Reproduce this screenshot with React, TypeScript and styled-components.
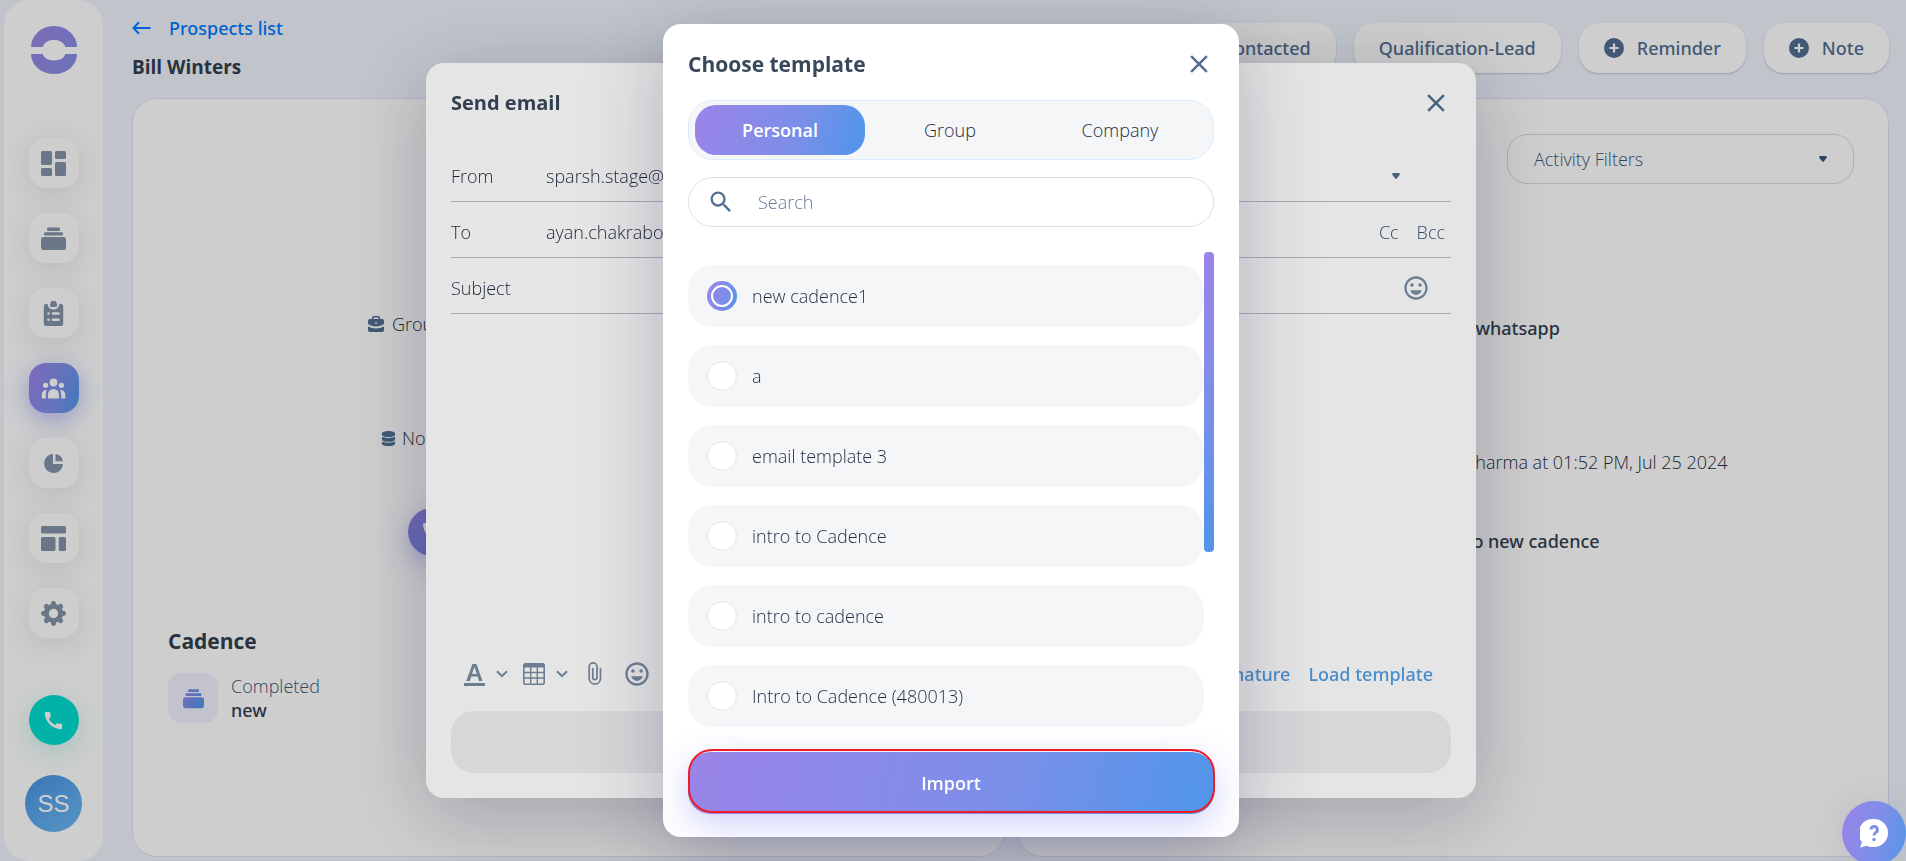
import React, { useState } from "react";
import styled, { createGlobalStyle, css } from "styled-components";
import { MdClose, MdSearch, MdOutlineEmojiEmotions, MdCall } from "react-icons/md";
import { FaDatabase } from "react-icons/fa6";

const color = {
  page: "#eff4fc",
  ink: "#1f2c40",
  title: "#3a485b",
  heading: "#333f4f",
  slate: "#516f90",
  slateText: "#3b5778",
  icon: "#8294a9",
  muted: "#667c96",
  field: "#f4f6f8",
};
const brand = "linear-gradient(105deg, #9b84e8 0%, #7b8fe8 60%, #5495ea 95%)";

const GlobalStyle = createGlobalStyle`
  *, *::before, *::after { box-sizing: border-box; }
  body {
    margin: 0;
    background: ${color.page};
    color: ${color.ink};
    font: 300 18px/26px "Open Sans", "Noto Sans", sans-serif;
    overflow: hidden;
  }
  button, input, select, textarea { font: inherit; color: inherit; margin: 0; }
  button { border: 0; padding: 0; background: none; cursor: pointer; }
  h1, h2, p { margin: 0; }
  svg { display: block; }
`;

/* ---------- icons ---------- */

type IconProps = { size: number };

const DashboardIcon = ({ size }: IconProps) => (
  <svg width={size} height={size} viewBox="0 0 25 25" fill="currentColor">
    <rect width="11" height="14" rx="1.5" />
    <rect y="17" width="11" height="8" rx="1.5" />
    <rect x="14" width="11" height="8" rx="1.5" />
    <rect x="14" y="11" width="11" height="14" rx="1.5" />
  </svg>
);

const StackIcon = ({ size, gradient }: IconProps & { gradient?: boolean }) => (
  <svg width={size} height={size} viewBox="0 0 25 25" fill={gradient ? "url(#stackFill)" : "currentColor"}>
    {gradient && (
      <defs>
        <linearGradient id="stackFill" gradientUnits="userSpaceOnUse" x1="0" y1="0" x2="25" y2="10">
          <stop offset="0" stopColor="#9b84e8" />
          <stop offset="1" stopColor="#5495ea" />
        </linearGradient>
      </defs>
    )}
    <rect x="6" y="1.5" width="13" height="3.4" rx="1.2" />
    <rect x="3" y="6.2" width="19" height="3.4" rx="1.2" />
    <rect y="11" width="25" height="13" rx="2.8" />
  </svg>
);

const ClipboardIcon = ({ size }: IconProps) => (
  <svg width={size} height={size} viewBox="0 0 25 25" fill="currentColor">
    <path
      fillRule="evenodd"
      d="M5 3H6.500A6 5.500 0 0 0 18.500 3H20A2.200 2.200 0 0 1 22.200 5.200V22.800A2.200 2.200 0 0 1 20 25H5A2.200 2.200 0 0 1 2.800 22.800V5.200A2.200 2.200 0 0 1 5 3ZM7.500 11.200A1.300 1.300 0 1 0 7.500 13.800A1.300 1.300 0 1 0 7.500 11.200ZM12 11.200A1.300 1.300 0 0 0 12 13.800H17.500A1.300 1.300 0 0 0 17.500 11.200ZM7.500 17.400A1.300 1.300 0 1 0 7.500 20A1.300 1.300 0 1 0 7.500 17.400ZM12 17.400A1.300 1.300 0 0 0 12 20H17.500A1.300 1.300 0 0 0 17.500 17.400Z"
    />
    <path d="M9.500 2.500A3 3 0 0 1 15.500 2.500H16V4.500A1.400 1.400 0 0 1 14.600 6H10.400A1.400 1.400 0 0 1 9 4.500V2.500Z" />
  </svg>
);

const PeopleIcon = ({ size }: IconProps) => (
  <svg width={size} height={size} viewBox="0 0 25 25" fill="currentColor">
    <circle cx="12.500" cy="6.500" r="3.900" />
    <circle cx="4.600" cy="9.300" r="2.600" />
    <circle cx="20.400" cy="9.300" r="2.600" />
    <path d="M7 22.500V18.500A5.500 5.500 0 0 1 18 18.500V22.500Z" />
    <path d="M.8 22.500V18A4.300 4.300 0 0 1 5.800 14Q4.800 16 4.800 18.500V22.500Z" />
    <path d="M24.200 22.500V18A4.300 4.300 0 0 0 19.200 14Q20.200 16 20.200 18.500V22.500Z" />
  </svg>
);

const PieIcon = ({ size }: IconProps) => (
  <svg width={size} height={size} viewBox="0 0 25 25" fill="currentColor">
    <path d="M12 3V13H22A9.500 9.500 0 1 1 12 3Z" />
    <path d="M14.500 3A8.500 8.500 0 0 1 22 10.200H14.500Z" />
  </svg>
);

const LayoutIcon = ({ size }: IconProps) => (
  <svg width={size} height={size} viewBox="0 0 25 25" fill="currentColor">
    <rect width="25" height="7.500" rx="1.500" />
    <rect y="11" width="14.500" height="14" rx="1.500" />
    <rect x="17.700" y="11" width="7.300" height="14" rx="1.500" />
  </svg>
);

const GearIcon = ({ size }: IconProps) => (
  <svg width={size} height={size} viewBox="0 0 25 25" fill="none" stroke="currentColor">
    <circle cx="12.500" cy="12.500" r="7.200" strokeWidth="5" />
    {[0, 45, 90, 135].map((angle) => (
      <g key={angle} transform={`rotate(${angle} 12.500 12.500)`} fill="currentColor" stroke="none">
        <rect x="10" y="0" width="5" height="6" rx="2.400" />
        <rect x="10" y="19" width="5" height="6" rx="2.400" />
      </g>
    ))}
  </svg>
);

const LogoIcon = () => (
  <svg width="46" height="48" viewBox="0 0 46 48" fill="url(#logoFill)">
    <defs>
      <linearGradient id="logoFill" gradientUnits="userSpaceOnUse" x1="0" y1="0" x2="46" y2="20">
        <stop offset="0" stopColor="#9b84e0" />
        <stop offset="1" stopColor="#888ee6" />
      </linearGradient>
    </defs>
    <path d="M0 21A23 21 0 0 1 46 21H34.500A12 10 0 0 0 11.500 21Z" />
    <path d="M0 28H11.500A12 9 0 0 0 34.500 28H46A23 20 0 0 1 0 28Z" />
  </svg>
);

const BriefcaseIcon = () => (
  <svg width="16" height="16" viewBox="0 0 16 16" fill="currentColor">
    <path fillRule="evenodd" d="M4 3V2A2 2 0 0 1 6 0H10A2 2 0 0 1 12 2V3H14A2 2 0 0 1 16 5V8Q12 10.500 8 10.500T0 8V5A2 2 0 0 1 2 3ZM5.600 3H10.400V1.600H5.600ZM8 6.300A.9.9 0 1 0 8 8.100A.9.9 0 1 0 8 6.300Z" />
    <path d="M0 10.500Q4 12.500 8 12.500T16 10.500V14A2 2 0 0 1 14 16H2A2 2 0 0 1 0 14Z" />
  </svg>
);

const ArrowLeftIcon = () => (
  <svg width="19" height="14" viewBox="0 0 19 14" fill="none" stroke="currentColor" strokeWidth="2">
    <path d="M18.500 7H1.500M7 1.200L1.500 7L7 12.800" />
  </svg>
);

const PlusCircleIcon = () => (
  <svg width="20" height="20" viewBox="0 0 20 20">
    <circle cx="10" cy="10" r="10" fill="currentColor" />
    <path d="M10 5.500V14.500M5.500 10H14.500" stroke="#fff" strokeWidth="2.200" />
  </svg>
);

const CaretIcon = () => (
  <svg width="8" height="6" viewBox="0 0 8 6" fill="currentColor">
    <path d="M1 0H7Q8.500 .5 7.500 2L5 5.200Q4 6.200 3 5.200L.5 2Q-.5 .5 1 0Z" />
  </svg>
);

const ChevronIcon = () => (
  <svg width="12" height="8" viewBox="0 0 12 8" fill="none" stroke="currentColor" strokeWidth="2">
    <path d="M1 1.200L6 6.200L11 1.200" />
  </svg>
);

const TableIcon = () => (
  <svg width="22" height="22" viewBox="0 0 22 22" fill="none" stroke="currentColor">
    <rect x=".8" y=".8" width="20.400" height="20.400" rx="2" strokeWidth="1.600" />
    <path d="M1 2.500H21" strokeWidth="4" />
    <path d="M1 9.500H21M1 15H21M7.700 4V21M14.300 4V21" strokeWidth="1.400" />
  </svg>
);

const ClipIcon = () => (
  <svg width="14" height="24" viewBox="0 0 14 24" fill="none" stroke="currentColor" strokeWidth="1.700" strokeLinecap="round">
    <path d="M12.500 6.500V17A5.700 5.700 0 0 1 1.200 17V4.800A3.900 3.900 0 0 1 9 4.800V15.500A2.100 2.100 0 0 1 4.800 15.500V6.500" />
  </svg>
);

const HelpIcon = () => (
  <svg width="28" height="33" viewBox="0 0 28 33">
    <path fill="#fff" d="M14 2A14 14 0 0 1 14 30Q9.500 30.500 7 28.800L0 30.500L2 25A14 14 0 0 1 14 2Z" />
    <path d="M11 12.500A3.200 3.200 0 1 1 15.500 15.600Q14 16.500 14 18.500" fill="none" stroke="#7b8ee8" strokeWidth="2.800" />
    <circle cx="14" cy="22.500" r="1.700" fill="#7b8ee8" />
  </svg>
);

/* ---------- page behind the dialogs ---------- */

const Shell = styled.div`
  display: flex;
  gap: 29px;
  min-height: 100vh;
  padding: 0 17px 0 4px;
`;

const Sidebar = styled.nav`
  display: flex;
  flex-direction: column;
  align-items: center;
  flex: 0 0 99px;
  padding: 26px 0 0;
  border-radius: 25px;
  background: #fff;
`;

const NavList = styled.div`
  display: flex;
  flex-direction: column;
  gap: 25px;
  margin: 64px 0 57px;
`;

const NavButton = styled.button<{ $active?: boolean }>`
  display: grid;
  place-items: center;
  width: 50px;
  height: 50px;
  border-radius: 17px;
  color: ${color.icon};
  background: #fff;
  box-shadow: 0 6px 30px rgba(30, 30, 40, 0.12);
  ${(p) =>
    p.$active &&
    css`
      color: #fff;
      background: ${brand};
      box-shadow: 0 6px 24px rgba(80, 100, 230, 0.45);
    `}
`;

const CallButton = styled.button`
  display: grid;
  place-items: center;
  width: 50px;
  height: 50px;
  border-radius: 50%;
  color: #fff;
  background: #00dccf;
  box-shadow: 0 8px 28px rgba(0, 190, 170, 0.22);
`;

const Avatar = styled.button`
  width: 57px;
  height: 57px;
  margin-top: 30px;
  border-radius: 50%;
  color: #fff;
  background: linear-gradient(145deg, #4a92e2, #6cbaf4);
  font: 400 24px/57px "Liberation Sans", Arial, sans-serif;
`;

const Main = styled.main`
  display: flex;
  flex-direction: column;
  flex: 1;
  min-width: 0;
  padding: 15px 0 4px;
`;

const Header = styled.header`
  display: flex;
  justify-content: space-between;
  height: 83px;
`;

const BackLink = styled.a`
  display: flex;
  align-items: center;
  gap: 18px;
  color: #007aff;
  font-family: "Noto Sans", sans-serif;
  font-weight: 500;
  text-decoration: none;
`;

const PersonName = styled.h1`
  margin-top: 13px;
  color: ${color.heading};
  font-size: 19px;
  font-weight: 700;
  line-height: 26px;
`;

const HeaderActions = styled.div`
  display: flex;
  gap: 18px;
  padding-top: 8px;
`;

const PillButton = styled.button`
  display: flex;
  align-items: center;
  gap: 13px;
  height: 50px;
  padding: 0 25px;
  border-radius: 20px;
  color: ${color.slate};
  background: #fff;
  box-shadow: 0 1px 2px rgba(40, 50, 80, 0.25);
  font-family: "Noto Sans", sans-serif;
  font-weight: 500;
`;

const Cards = styled.div`
  display: grid;
  grid-template-columns: 1fr 1fr;
  gap: 12px;
  flex: 1;
`;

const Card = styled.section`
  padding: 35px 34px 35px 35px;
  border: 1px solid #dde1f8;
  border-radius: 25px;
  background: #fff;
`;

const InfoLine = styled.p<{ $indent: number; $top: number }>`
  display: flex;
  align-items: center;
  gap: ${(p) => (p.$indent > 210 ? 6 : 8)}px;
  margin: ${(p) => p.$top}px 0 0 ${(p) => p.$indent}px;
  svg {
    color: ${color.slate};
  }
`;

const RoundCall = styled.button`
  display: grid;
  place-items: center;
  width: 48px;
  height: 48px;
  margin: 57px 0 0 240px;
  border-radius: 50%;
  color: #fff;
  background: linear-gradient(135deg, #8f80e0, #6f86e0);
  box-shadow: 0 8px 28px rgba(80, 80, 220, 0.35);
`;

const CardTitle = styled.h2`
  margin-top: 70px;
  color: ${color.heading};
  font-size: 21px;
  font-weight: 700;
  line-height: 30px;
`;

const CadenceRow = styled.div`
  display: flex;
  align-items: center;
  gap: 13px;
  margin-top: 17px;
  line-height: 24px;
`;

const CadenceTile = styled.div`
  display: grid;
  place-items: center;
  width: 50px;
  height: 50px;
  border-radius: 14px;
  background: #f0f2fe;
`;

const Status = styled.div`
  color: ${color.slateText};
`;

const Strong = styled.div`
  color: ${color.heading};
  font-family: "Noto Sans", sans-serif;
  font-weight: 500;
`;

const FilterBox = styled.label`
  display: flex;
  align-items: center;
  width: 347px;
  height: 50px;
  margin-left: auto;
  padding: 0 26px;
  border: 1px solid #d8dadc;
  border-radius: 20px;
  color: ${color.slateText};
`;

const PlainSelect = styled.select`
  flex: 1;
  min-width: 0;
  padding: 0;
  border: 0;
  outline: 0;
  appearance: none;
  background: none;
`;

const Feed = styled.div`
  display: flex;
  flex-direction: column;
  padding: 131px 0 0 413px;
  white-space: nowrap;
`;

const FeedEvent = styled(Strong)<{ $indent?: number }>`
  margin-left: ${(p) => p.$indent ?? 0}px;
`;

const FeedMeta = styled.p`
  margin: 108px 0 53px;
`;

/* ---------- dialogs ---------- */

const Backdrop = styled.div`
  position: fixed;
  inset: 0;
  display: grid;
  place-items: center;
  padding-right: 4px;
  background: rgba(0, 0, 0, 0.1);
`;

const Dialog = styled.div<{ $width: number; $bottom: number }>`
  display: flex;
  flex-direction: column;
  width: ${(p) => p.$width}px;
  max-width: 100%;
  padding: 25px 25px ${(p) => p.$bottom}px;
  border-radius: 18px;
  background: #fff;
  box-shadow: 0 16px 80px rgba(30, 30, 70, 0.26);
`;

const DialogHead = styled.div`
  display: flex;
  align-items: center;
  justify-content: space-between;
  height: 30px;
`;

const DialogTitle = styled.h2<{ $size: number }>`
  color: ${color.title};
  font-size: ${(p) => p.$size}px;
  font-weight: 700;
  line-height: 28px;
`;

const CloseButton = styled.button`
  color: ${color.slate};
`;

const FieldRow = styled.div<{ $first?: boolean }>`
  display: flex;
  align-items: center;
  height: 56px;
  margin-top: ${(p) => (p.$first ? 28 : 0)}px;
  padding-top: 4px;
  border-bottom: 1px solid #b5c1ce;
`;

const FieldLabel = styled.label`
  flex: 0 0 95px;
`;

const PlainInput = styled.input`
  flex: 1;
  min-width: 0;
  padding: 0;
  border: 0;
  outline: 0;
  background: none;
  &::placeholder {
    color: ${color.muted};
    opacity: 1;
  }
`;

const FieldEnd = styled.div<{ $pad: number }>`
  display: flex;
  gap: 18px;
  padding-right: ${(p) => p.$pad}px;
  color: ${color.slate};
`;

const LinkButton = styled.button`
  color: ${color.slateText};
`;

const IconButton = styled.button`
  color: #7a8da3;
`;

const Editor = styled.textarea`
  height: 348px;
  border: 0;
  outline: 0;
  resize: none;
  background: none;
`;

const Toolbar = styled.div`
  display: flex;
  align-items: center;
  height: 24px;
  padding: 0 18px 0 13px;
  color: #7a8da3;
`;

const ToolGroup = styled.div`
  display: flex;
  align-items: center;
  gap: 11px;
  margin-right: 15px;
`;

const LetterButton = styled.button`
  width: 21px;
  height: 24px;
  border-bottom: 3px solid currentColor;
  color: #7a8da3;
  font-family: "Liberation Sans", Arial, sans-serif;
  font-size: 24px;
  font-weight: 700;
  line-height: 20px;
`;

const ToolIcons = styled.div`
  display: flex;
  align-items: center;
  gap: 21px;
  margin: 0 auto 0 5px;
`;

const TextAction = styled.button`
  margin-left: 18px;
  color: #539de2;
  font-family: "Noto Sans", sans-serif;
  font-weight: 500;
`;

const SendButton = styled.button`
  height: 62px;
  margin-top: 25px;
  border-radius: 23px;
  background: #eff0f1;
`;

const Tabs = styled.div`
  display: grid;
  grid-template-columns: repeat(3, 1fr);
  height: 60px;
  margin-top: 21px;
  padding: 4px 8px 4px 6px;
  border: 1px solid #d9ecfd;
  border-radius: 25px;
  background: ${color.field};
`;

const Tab = styled.button<{ $active: boolean }>`
  border-radius: 21px;
  ${(p) =>
    p.$active &&
    css`
      color: #fff;
      background: ${brand};
      font-weight: 600;
    `}
`;

const SearchBox = styled.label`
  display: flex;
  align-items: center;
  gap: 23px;
  height: 50px;
  margin-top: 17px;
  padding: 0 18px;
  border: 1px solid #dcdee0;
  border-radius: 25px;
  color: ${color.slate};
`;

const ListArea = styled.div`
  display: flex;
  margin-top: 25px;
`;

const TemplateList = styled.div`
  display: flex;
  flex: 1;
  flex-direction: column;
  gap: 18px;
  padding-top: 13px;
`;

const ScrollThumb = styled.div`
  width: 10px;
  height: 300px;
  border-radius: 4px;
  background: linear-gradient(180deg, #9b84e8, #7b8fe8 50%, #5495ea 95%);
`;

const TemplateRow = styled.label`
  display: flex;
  align-items: center;
  gap: 15px;
  height: 62px;
  padding: 0 19px;
  border-radius: 25px;
  background: ${color.field};
  cursor: pointer;
`;

const Radio = styled.input`
  position: relative;
  width: 30px;
  height: 30px;
  border: 1px solid #e4e7ea;
  border-radius: 50%;
  appearance: none;
  background: #fff;
  &:checked {
    border: 0;
    background: ${brand};
  }
  &:checked::after {
    content: "";
    position: absolute;
    inset: 4px;
    border: 2px solid #fff;
    border-radius: 50%;
  }
`;

const ImportButton = styled.button`
  position: relative;
  height: 62px;
  margin-top: 25px;
  border-radius: 22px;
  color: #fff;
  background: ${brand};
  box-shadow: 0 10px 36px rgba(100, 110, 235, 0.32);
  font-weight: 600;
  line-height: 54px;
  &::after {
    content: "";
    position: absolute;
    inset: -3px -1px 1px 0;
    border: 2px solid #ee1c24;
    border-radius: 24px;
  }
`;

const HelpButton = styled.button`
  position: fixed;
  right: 0;
  bottom: -4px;
  display: grid;
  place-items: center;
  width: 64px;
  height: 64px;
  border-radius: 50%;
  background: ${brand};
  box-shadow: 0 0 32px rgba(80, 80, 160, 0.12);
`;

const navItems = [
  { name: "Dashboard", Icon: DashboardIcon },
  { name: "Cadences", Icon: StackIcon },
  { name: "Tasks", Icon: ClipboardIcon },
  { name: "Prospects", Icon: PeopleIcon },
  { name: "Reports", Icon: PieIcon },
  { name: "Templates", Icon: LayoutIcon },
  { name: "Settings", Icon: GearIcon },
];

const scopes = ["Personal", "Group", "Company"];

const templates = [
  "new cadence1",
  "a",
  "email template 3",
  "intro to Cadence",
  "intro to cadence",
  "Intro to Cadence (480013)",
];

function ProspectPage() {
  return (
    <Shell>
      <Sidebar>
        <LogoIcon />
        <NavList>
          {navItems.map(({ name, Icon }) => (
            <NavButton key={name} aria-label={name} $active={name === "Prospects"}>
              <Icon size={25} />
            </NavButton>
          ))}
        </NavList>
        <CallButton aria-label="Call">
          <MdCall size={23} />
        </CallButton>
        <Avatar>SS</Avatar>
      </Sidebar>
      <Main>
        <Header>
          <div>
            <BackLink href="#prospects">
              <ArrowLeftIcon />
              Prospects list
            </BackLink>
            <PersonName>Bill Winters</PersonName>
          </div>
          <HeaderActions>
            <PillButton>Contacted</PillButton>
            <PillButton>Qualification-Lead</PillButton>
            <PillButton>
              <PlusCircleIcon />
              Reminder
            </PillButton>
            <PillButton>
              <PlusCircleIcon />
              Note
            </PillButton>
          </HeaderActions>
        </Header>
        <Cards>
          <Card>
            <InfoLine $indent={200} $top={177}>
              <BriefcaseIcon />
              Group
            </InfoLine>
            <InfoLine $indent={213} $top={88}>
              <FaDatabase size={15} />
              Not available
            </InfoLine>
            <RoundCall aria-label="Call prospect">
              <MdCall size={24} />
            </RoundCall>
            <CardTitle>Cadence</CardTitle>
            <CadenceRow>
              <CadenceTile>
                <StackIcon size={21} gradient />
              </CadenceTile>
              <div>
                <Status>Completed</Status>
                <Strong>new</Strong>
              </div>
            </CadenceRow>
          </Card>
          <Card>
            <FilterBox>
              <PlainSelect aria-label="Activity filters">
                <option>Activity Filters</option>
              </PlainSelect>
              <CaretIcon />
            </FilterBox>
            <Feed>
              <FeedEvent $indent={10}>whatsapp</FeedEvent>
              <FeedMeta>Sharma at 01:52 PM, Jul 25 2024</FeedMeta>
              <FeedEvent>to new cadence</FeedEvent>
            </Feed>
          </Card>
        </Cards>
      </Main>
    </Shell>
  );
}

function SendEmailDialog() {
  return (
    <Backdrop>
      <Dialog role="dialog" aria-label="Send email" $width={1050} $bottom={25}>
        <DialogHead>
          <DialogTitle $size={20}>Send email</DialogTitle>
          <CloseButton aria-label="Close email">
            <MdClose size={30} />
          </CloseButton>
        </DialogHead>
        <FieldRow $first>
          <FieldLabel htmlFor="from">From</FieldLabel>
          <PlainSelect id="from">
            <option>sparsh.stage@gmail.com</option>
          </PlainSelect>
          <FieldEnd $pad={51}>
            <CaretIcon />
          </FieldEnd>
        </FieldRow>
        <FieldRow>
          <FieldLabel htmlFor="to">To</FieldLabel>
          <PlainInput id="to" defaultValue="ayan.chakraborty@gmail.com" />
          <FieldEnd $pad={6}>
            <LinkButton>Cc</LinkButton>
            <LinkButton>Bcc</LinkButton>
          </FieldEnd>
        </FieldRow>
        <FieldRow>
          <FieldLabel htmlFor="subject">Subject</FieldLabel>
          <PlainInput id="subject" />
          <FieldEnd $pad={21}>
            <IconButton aria-label="Subject emoji">
              <MdOutlineEmojiEmotions size={28} />
            </IconButton>
          </FieldEnd>
        </FieldRow>
        <Editor aria-label="Message" />
        <Toolbar>
          <ToolGroup>
            <LetterButton>A</LetterButton>
            <ChevronIcon />
          </ToolGroup>
          <ToolGroup>
            <TableIcon />
            <ChevronIcon />
          </ToolGroup>
          <ToolIcons>
            <ClipIcon />
            <MdOutlineEmojiEmotions size={28} />
          </ToolIcons>
          <TextAction>Signature</TextAction>
          <TextAction>Load template</TextAction>
        </Toolbar>
        <SendButton aria-label="Send" />
      </Dialog>
    </Backdrop>
  );
}

function ChooseTemplateDialog() {
  const [scope, setScope] = useState("Personal");
  const [selected, setSelected] = useState(0);
  return (
    <Backdrop>
      <Dialog role="dialog" aria-label="Choose template" $width={576} $bottom={23}>
        <DialogHead>
          <DialogTitle $size={21}>Choose template</DialogTitle>
          <CloseButton aria-label="Close templates">
            <MdClose size={30} />
          </CloseButton>
        </DialogHead>
        <Tabs role="tablist">
          {scopes.map((name) => (
            <Tab key={name} role="tab" $active={name === scope} onClick={() => setScope(name)}>
              {name}
            </Tab>
          ))}
        </Tabs>
        <SearchBox>
          <MdSearch size={28} />
          <PlainInput type="text" placeholder="Search" aria-label="Search" />
        </SearchBox>
        <ListArea>
          <TemplateList>
            {templates.map((name, index) => (
              <TemplateRow key={name}>
                <Radio type="radio" name="template" checked={selected === index} onChange={() => setSelected(index)} />
                {name}
              </TemplateRow>
            ))}
          </TemplateList>
          <ScrollThumb />
        </ListArea>
        <ImportButton>Import</ImportButton>
      </Dialog>
    </Backdrop>
  );
}

export default function App() {
  return (
    <>
      <GlobalStyle />
      <ProspectPage />
      <SendEmailDialog />
      <ChooseTemplateDialog />
      <HelpButton aria-label="Help">
        <HelpIcon />
      </HelpButton>
    </>
  );
}
